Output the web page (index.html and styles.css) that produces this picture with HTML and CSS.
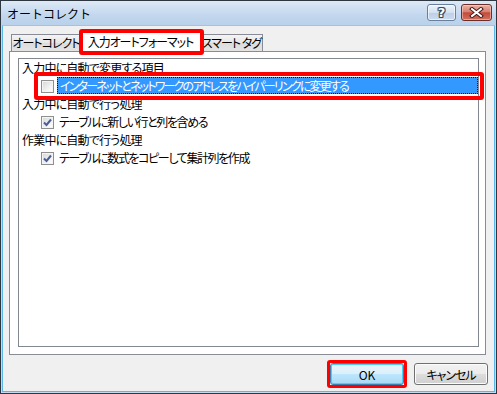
FILE: index.html
```html
<!DOCTYPE html>
<html lang="ja">
<head>
<meta charset="utf-8">
<title>オートコレクト</title>
<link rel="stylesheet" href="styles.css">
</head>
<body>
<div class="window">
  <div class="titlebar">
    <span class="title">オートコレクト</span>
    <div class="caption-buttons">
      <div class="cap-btn help"><span class="help-glyph">?</span></div>
      <div class="cap-btn close">
        <svg width="15" height="11" viewBox="0 0 15 11">
          <path d="M3 2 L12 9 M12 2 L3 9" stroke="#3a1a1a" stroke-width="4" stroke-linecap="square" fill="none"/>
          <path d="M3 2 L12 9 M12 2 L3 9" stroke="#ffffff" stroke-width="2" stroke-linecap="square" fill="none"/>
        </svg>
      </div>
    </div>
  </div>
  <div class="frame">
    <div class="client">
      <div class="tabs">
        <div class="tab tab-first">オートコレクト</div>
        <div class="tab tab-active">入力オートフォーマット<span class="mark mark-tab"></span></div>
        <div class="tab tab-last">スマート&nbsp;タグ</div>
      </div>
      <div class="panel">
        <div class="listbox">
          <div class="row header">入力中に自動で変更する項目</div>
          <div class="row item">
            <span class="check"></span>
            <span class="label selected">インターネットとネットワークのアドレスをハイパーリンクに変更する</span>
            <span class="mark mark-row"></span>
          </div>
          <div class="row header">入力中に自動で行う処理</div>
          <div class="row item">
            <span class="check checked"><svg width="11" height="11" viewBox="0 0 11 11"><path d="M2 5.5 L4.5 8 L9 2.5" stroke="#4a5f97" stroke-width="2" fill="none"/></svg></span>
            <span class="label">テーブルに新しい行と列を含める</span>
          </div>
          <div class="row header">作業中に自動で行う処理</div>
          <div class="row item">
            <span class="check checked"><svg width="11" height="11" viewBox="0 0 11 11"><path d="M2 5.5 L4.5 8 L9 2.5" stroke="#4a5f97" stroke-width="2" fill="none"/></svg></span>
            <span class="label">テーブルに数式をコピーして集計列を作成</span>
          </div>
        </div>
      </div>
      <div class="footer">
        <button class="btn btn-default">OK<span class="mark mark-btn"></span></button>
        <button class="btn">キャンセル</button>
      </div>
    </div>
  </div>
</div>
</body>
</html>
```
FILE: styles.css
```css
* { box-sizing: border-box; }
html, body {
  margin: 0;
  padding: 0;
  width: 497px;
  height: 394px;
  overflow: hidden;
  background: #f0f0f0;
}
body {
  font-family: "Noto Sans CJK JP", "Noto Sans", sans-serif;
  font-size: 12px;
  color: #000;
}
.window {
  width: 497px;
  height: 394px;
  border: 1px solid #2e3640;
  display: flex;
  flex-direction: column;
  background: #c6daef;
}
.titlebar {
  height: 24px;
  flex: none;
  display: flex;
  justify-content: space-between;
  align-items: flex-start;
  background: linear-gradient(#dde9f6, #c2d7ee 60%, #b9d1ea);
  padding: 0 4px 0 6px;
}
.title {
  font-size: 12px;
  line-height: 24px;
  padding-top: 1px;
  color: #000;
}
.caption-buttons {
  display: flex;
  gap: 5px;
  padding-top: 3px;
}
.cap-btn {
  height: 17px;
  border-radius: 3px;
  display: flex;
  align-items: center;
  justify-content: center;
}
.help {
  width: 29px;
  border: 1px solid #6a7f9c;
  background: linear-gradient(#eef4fb, #d3e1f1 50%, #bccfe8 51%, #c9dbef);
  box-shadow: inset 0 0 0 1px rgba(255,255,255,0.6);
}
.help-glyph {
  font-family: "DejaVu Sans", sans-serif;
  font-weight: bold;
  font-size: 13px;
  line-height: 13px;
  color: #fff;
  text-shadow: 1px 0 0 #3b4a5e, -1px 0 0 #3b4a5e, 0 1px 0 #3b4a5e, 0 -1px 0 #3b4a5e, 1px 1px 0 #3b4a5e, -1px -1px 0 #3b4a5e, 1px -1px 0 #3b4a5e, -1px 1px 0 #3b4a5e;
}
.close {
  width: 31px;
  border: 1px solid #6d2e2a;
  background: linear-gradient(#eab3a6, #d8806f 45%, #c44a3c 52%, #d0705f);
  box-shadow: inset 0 0 0 1px rgba(255,220,210,0.5);
}
.frame {
  flex: 1;
  padding: 0 1px 1px 1px;
  display: flex;
}
.client {
  flex: 1;
  background: #f0f0f0;
  border: 1px solid #5cb6e8;
  border-top-color: #a8c2dd;
  padding: 5px 0 0 6px;
  display: flex;
  flex-direction: column;
}
.tabs {
  height: 20px;
  display: flex;
  align-items: flex-end;
  padding-left: 2px;
  position: relative;
  z-index: 1;
}
.tab {
  height: 17px;
  border: 1px solid #898c95;
  border-bottom: none;
  background: linear-gradient(#f4f4f4, #e6e6e6 50%, #dcdcdc 51%, #e4e4e4);
  font-feature-settings: "palt";
  letter-spacing: -1px;
  line-height: 15px;
  text-align: center;
  white-space: nowrap;
}
.tab-first { width: 69px; border-right: none; }
.tab-last { width: 62px; border-left: none; }
.tab-active {
  width: 121px;
  height: 21px;
  margin-bottom: -1px;
  background: #fff;
  line-height: 19px;
  position: relative;
}
.panel {
  width: 477px;
  height: 304px;
  flex: none;
  border: 1px solid #898c95;
  background: #fff;
  padding: 6px 6px 7px 8px;
}
.listbox {
  height: 100%;
  border: 1px solid #828790;
  background: #fff;
}
.row {
  height: 18px;
  line-height: 18px;
  font-feature-settings: "palt";
  letter-spacing: -0.8px;
  white-space: nowrap;
}
.header { padding-left: 3px; }
.item {
  display: flex;
  align-items: center;
  padding-left: 22px;
  position: relative;
}
.check {
  width: 13px;
  height: 13px;
  flex: none;
  border: 1px solid #8f8f8f;
  background: linear-gradient(135deg, #d6d6d6, #f6f6f6 70%, #ffffff);
  box-shadow: inset 0 0 0 1px #f4f4f4;
  margin-right: 3px;
  display: flex;
  align-items: center;
  justify-content: center;
}
.check svg { display: block; }
.label { padding-left: 2px; letter-spacing: -1.4px; }
.selected {
  flex: 1;
  height: 17px;
  line-height: 15px;
  background: #3399ff;
  color: #fff;
  border: 1px dotted #1b1200;
  padding-left: 2px;
  letter-spacing: -1.8px;
  align-self: flex-start;
}
.mark {
  position: absolute;
  border-style: solid;
  border-color: #ff0000;
  pointer-events: none;
}
.mark-tab {
  left: -2px;
  top: -3px;
  width: 125px;
  height: 26px;
  border-width: 4px;
  border-radius: 3px;
}
.mark-row {
  left: 15px;
  top: -5px;
  width: 450px;
  height: 28px;
  border-width: 4px;
  border-radius: 3px;
}
.footer {
  display: flex;
  justify-content: flex-end;
  gap: 10px;
  padding-right: 6px;
  margin-top: 8px;
}
.btn {
  width: 74px;
  height: 22px;
  margin: 0;
  padding: 0;
  font-family: "Noto Sans CJK JP", "Noto Sans", sans-serif;
  font-size: 12px;
  font-weight: normal;
  font-feature-settings: "palt";
  letter-spacing: -1px;
  color: #000;
  border: 1px solid #707070;
  border-radius: 3px;
  background: linear-gradient(#f2f2f2, #ebebeb 50%, #dddddd 51%, #cfcfcf);
  box-shadow: inset 0 0 0 1px #fcfcfc;
  position: relative;
}
.btn-default {
  border-color: #3c7fb1;
  background: linear-gradient(#eaf6fd, #d9f0fc 50%, #bee6fd 51%, #a7d9f5);
  box-shadow: inset 0 0 0 1px #48d0fa;
  letter-spacing: 0;
}
.mark-btn {
  left: -4px;
  top: -4px;
  right: -4px;
  bottom: -4px;
  border-width: 3px;
  border-radius: 3px;
}
```
